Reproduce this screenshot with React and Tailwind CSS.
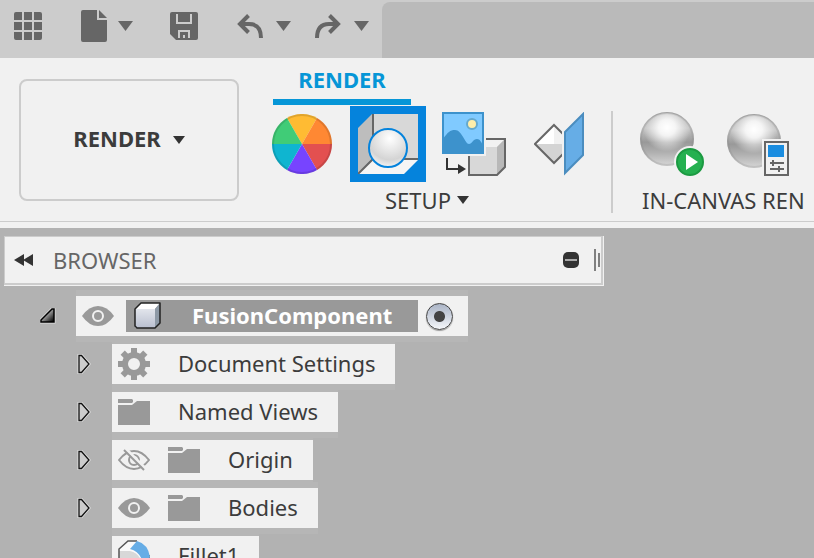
import React from 'react';

function Caret({ className }) {
  return (
    <svg viewBox="0 0 14 10" className={className} preserveAspectRatio="none" aria-hidden="true">
      <path d="M0 0H14L7 10Z" fill="currentColor" />
    </svg>
  );
}

function GridIcon() {
  return (
    <svg width="28" height="28" viewBox="0 0 28 28" fill="currentColor" aria-hidden="true">
      <path d="M2 0H8V8H0V2Q0 0 2 0ZM10 0H18V8H10ZM20 0H26Q28 0 28 2V8H20ZM0 10H8V18H0ZM10 10H18V18H10ZM20 10H28V18H20ZM0 20H8V28H2Q0 28 0 26ZM10 20H18V28H10ZM20 20H28V26Q28 28 26 28H20Z" />
    </svg>
  );
}

function FileIcon() {
  return (
    <svg width="26" height="32" viewBox="0 0 26 32" fill="currentColor" aria-hidden="true">
      <path d="M2 0H16V10H26V30Q26 32 24 32H2Q0 32 0 30V2Q0 0 2 0Z" />
      <path d="M18 0L26 8H18Z" />
    </svg>
  );
}

function SaveIcon() {
  return (
    <svg width="28" height="28" viewBox="0 0 28 28" aria-hidden="true">
      <path d="M2 0H26Q28 0 28 2V26Q28 28 26 28H6L0 22V2Q0 0 2 0Z" fill="#666" />
      <path d="M7 2V11H21V2M9 26V19H19V26" fill="none" stroke="#ccc" strokeWidth="2" />
      <path d="M13 23H15V26H13Z" fill="#ccc" />
    </svg>
  );
}

function UndoIcon({ flip }) {
  return (
    <svg width="26" height="24" viewBox="0 0 26 24" fill="none" stroke="currentColor" strokeWidth="4" className={flip ? '-scale-x-100' : ''} aria-hidden="true">
      <path d="M11.500 1.500L3 10L11.500 18.500M3 10H12Q24 10 24 24" />
    </svg>
  );
}

function WheelIcon() {
  return (
    <svg width="60" height="60" viewBox="0 0 60 60" aria-hidden="true">
      <path d="M30 30L15 4A30 30 0 0 1 45 4Z" fill="#ffbb33" />
      <path d="M30 30L45 4A30 30 0 0 1 60 30Z" fill="#ff8833" />
      <path d="M30 30H60A30 30 0 0 1 45 56Z" fill="#e35050" />
      <path d="M30 30L45 56A30 30 0 0 1 15 56Z" fill="#7744ff" />
      <path d="M30 30L15 56A30 30 0 0 1 0 30Z" fill="#0fb5d0" />
      <path d="M30 30H0A30 30 0 0 1 15 4Z" fill="#40cc77" />
      <circle cx="30" cy="30" r="29" fill="none" stroke="#000" strokeOpacity=".12" strokeWidth="2" />
    </svg>
  );
}

function SceneIcon() {
  return (
    <svg width="60" height="60" viewBox="0 0 60 60" aria-hidden="true">
      <defs>
        <radialGradient id="sceneBall" cx=".55" cy=".25" r=".75">
          <stop offset="0" stopColor="#fff" />
          <stop offset=".3" stopColor="#eee" />
          <stop offset=".75" stopColor="#d4d4d4" />
          <stop offset="1" stopColor="#f4f4f4" />
        </radialGradient>
      </defs>
      <path d="M14 0H60V45H14Z" fill="#d8d8d8" />
      <path d="M0 14L14 0V45L0 60Z" fill="#bdbdbd" />
      <path d="M0 60L14 46H60L46 60Z" fill="#f5f5f5" />
      <path d="M15 0V45L0 60M15 45H60" fill="none" stroke="#666" strokeWidth="2" />
      <circle cx="30" cy="34" r="19" fill="url(#sceneBall)" stroke="#0583dc" strokeWidth="2" />
    </svg>
  );
}

function DecalIcon() {
  return (
    <svg width="64" height="64" viewBox="0 0 64 64" aria-hidden="true">
      <path d="M27 27H63V55L55 63H27Z" fill="#d8d8d8" />
      <path d="M27 35L35 27H63L55 35Z" fill="#f2f2f2" />
      <path d="M55 35L63 27V55L55 63Z" fill="#b8b8b8" />
      <path d="M27 27H63V55L55 63H27Z" fill="none" stroke="#666" strokeWidth="2" />
      <path d="M0 0H44V44H0Z" fill="#f1f1f1" />
      <path d="M1 1H41V41H1Z" fill="#80caff" />
      <path d="M1 27C6 20 8 18 13 18C20 18 23 32 27 32C30 32 31 27 35 27C38 27 39 30 41 33V41H1Z" fill="#3d92cc" />
      <circle cx="30" cy="12" r="5" fill="#ffeeaa" stroke="#66a9cc" strokeWidth="2" />
      <path d="M1 1H41V41H1Z" fill="none" stroke="#3d92cc" strokeWidth="2" />
      <path d="M5 46V57H17" fill="none" stroke="#333" strokeWidth="2" />
      <path d="M16 52L24 57L16 62Z" fill="#333" />
    </svg>
  );
}

function TextureIcon() {
  return (
    <svg width="52" height="64" viewBox="0 0 52 64" aria-hidden="true">
      <path d="M1 32L20 13L39 32Z" fill="#fff" />
      <path d="M20 13L39 32H20Z" fill="#f1f1f1" />
      <path d="M1 32H20V51Z" fill="#e8e8e8" />
      <path d="M20 32H39L20 51L1 32Z" fill="#d4d4d4" />
      <path d="M20 13L39 32L20 51L1 32Z" fill="none" stroke="#666" strokeWidth="2" />
      <path d="M28 8H34V60H28Z" fill="#f1f1f1" />
      <path d="M31 20L49 2V43L31 61Z" fill="#66ade6" stroke="#4b8dbf" strokeWidth="2" />
    </svg>
  );
}

function Sphere({ id, cx, cy }) {
  return (
    <g>
      <defs>
        <linearGradient id={id + 'Base'} x1="0" y1="0" x2="0" y2="1">
          <stop offset="0" stopColor="#aaa" />
          <stop offset=".3" stopColor="#c4c4c4" />
          <stop offset=".56" stopColor="#999" />
          <stop offset=".75" stopColor="#b0b0b0" />
          <stop offset="1" stopColor="#d8d8d8" />
        </linearGradient>
        <radialGradient id={id + 'Glow'} cx=".5" cy=".28" r=".46">
          <stop offset="0" stopColor="#fff" />
          <stop offset=".35" stopColor="#fff" stopOpacity=".85" />
          <stop offset="1" stopColor="#fff" stopOpacity="0" />
        </radialGradient>
      </defs>
      <circle cx={cx} cy={cy} r="27" fill={'url(#' + id + 'Base)'} />
      <circle cx={cx} cy={cy} r="26" fill={'url(#' + id + 'Glow)'} />
      <circle cx={cx} cy={cy} r="26" fill="none" stroke="#888" strokeOpacity=".25" strokeWidth="2" />
    </g>
  );
}

function RenderPlayIcon() {
  return (
    <svg width="64" height="64" viewBox="0 0 64 64" aria-hidden="true">
      <Sphere id="play" cx="27" cy="27" />
      <circle cx="50" cy="50" r="16" fill="#f1f1f1" />
      <circle cx="50" cy="50" r="13" fill="#25b050" stroke="#1c9a42" strokeWidth="2" />
      <path d="M46 42L58 50L46 58Z" fill="#fff" />
    </svg>
  );
}

function RenderSettingsIcon() {
  return (
    <svg width="64" height="64" viewBox="0 0 64 64" aria-hidden="true">
      <Sphere id="prefs" cx="28" cy="29" />
      <path d="M36 27H64V64H36Z" fill="#f1f1f1" />
      <path d="M39 30H62V63H39Z" fill="#f1f1f1" stroke="#666" strokeWidth="2" />
      <path d="M42 33H58V45H42Z" fill="#1a8de0" />
      <path d="M44 51H58M44 57H58M47 48V54M53 54V60" fill="none" stroke="#666" strokeWidth="2" />
    </svg>
  );
}

function EyeIcon() {
  return (
    <svg width="32" height="20" viewBox="0 0 32 20" aria-hidden="true">
      <path d="M0 10Q7 0 16 0T32 10Q25 20 16 20T0 10Z" fill="#999" />
      <circle cx="16" cy="10" r="5" fill="#999" stroke="#f1f1f1" strokeWidth="2" />
    </svg>
  );
}

function EyeOffIcon() {
  return (
    <svg width="32" height="22" viewBox="0 0 32 22" fill="none" aria-hidden="true">
      <path d="M1 11Q8 2 16 2T31 11Q24 20 16 20T1 11Z" stroke="#999" strokeWidth="2" />
      <circle cx="16" cy="11" r="5" stroke="#999" strokeWidth="2" />
      <path d="M8 0L28 20" stroke="#f1f1f1" strokeWidth="3" />
      <path d="M6 1L26 21" stroke="#999" strokeWidth="2" />
    </svg>
  );
}

function FolderIcon() {
  return (
    <svg width="32" height="26" viewBox="0 0 32 26" fill="#999" aria-hidden="true">
      <path d="M0 0H14L15 1V3L14 4H0Z" />
      <path d="M0 6H14L19 2H32V26H0Z" />
    </svg>
  );
}

const teeth = [0, 45, 90, 135, 180, 225, 270, 315];

function GearIcon() {
  return (
    <svg width="32" height="32" viewBox="0 0 32 32" aria-hidden="true">
      {teeth.map((angle) => (
        <path key={angle} d="M13 0H19V8H13Z" fill="#999" transform={'rotate(' + angle + ' 16 16)'} />
      ))}
      <circle cx="16" cy="16" r="9" fill="none" stroke="#999" strokeWidth="6" />
    </svg>
  );
}

function CubeIcon() {
  return (
    <svg width="28" height="28" viewBox="0 0 28 28" aria-hidden="true">
      <defs>
        <linearGradient id="cubeFront" x1="0" y1="0" x2="0" y2="1">
          <stop offset="0" stopColor="#e2e5ec" />
          <stop offset="1" stopColor="#b9bfcf" />
        </linearGradient>
      </defs>
      <path d="M1 7L7 1H26L21 7Z" fill="#fff" />
      <path d="M21 7L26 1V21L21 26Z" fill="#8d99a6" />
      <path d="M1 7H21V26H1Z" fill="url(#cubeFront)" />
      <path d="M1 7L7 1H26V21L21 26H3L1 24Z" fill="none" stroke="#222" strokeWidth="1.500" strokeLinejoin="round" />
    </svg>
  );
}

function FilletIcon() {
  return (
    <svg width="32" height="32" viewBox="0 0 32 32" aria-hidden="true">
      <path d="M1 9L10 1H21L31 12V31H1Z" fill="#fafafa" />
      <path d="M1 11H12Q22 13 24 24V32H1Z" fill="#d8d8d8" />
      <path d="M1 32V9L10 1H19M31 15V32" fill="none" stroke="#555" strokeWidth="1.500" />
      <path d="M12 9L19 1Q30 4 32 17L25 24Q23 12 12 9Z" fill="#66ade6" />
    </svg>
  );
}

function Twisty({ open }) {
  return (
    <button type="button" aria-label={open ? 'Collapse' : 'Expand'} className="flex h-10 w-4 shrink-0 items-center justify-center">
      {open ? (
        <svg width="16" height="16" viewBox="0 0 16 16" aria-hidden="true">
          <defs>
            <linearGradient id="openArrow" x1="0" y1="0" x2="1" y2="1">
              <stop offset=".4" stopColor="#aaa" />
              <stop offset=".9" stopColor="#111" />
            </linearGradient>
          </defs>
          <path d="M1 14V12L12 1H14V14Z" fill="none" stroke="#ddd" strokeWidth="3" />
          <path d="M1 14V12L12 1H14V14Z" fill="url(#openArrow)" stroke="#000" strokeWidth="1.500" />
        </svg>
      ) : (
        <svg width="14" height="20" viewBox="0 0 14 20" aria-hidden="true">
          <path d="M2 1.500H4.500L12 10L4.500 18.500H2Z" fill="none" stroke="#ddd" strokeWidth="3" />
          <path d="M2 1.500H4.500L12 10L4.500 18.500H2Z" fill="#ccc" stroke="#111" strokeWidth="1.300" />
        </svg>
      )}
    </button>
  );
}

function TreeRow({ icons, label, leaf }) {
  return (
    <li className="flex items-center gap-5 pl-18">
      {leaf ? <span className="w-4 shrink-0" /> : <Twisty />}
      <div className="flex h-10 items-center bg-[#f1f1f1] pr-5 pl-1.5 shadow-[0_-6px_0_#b6b6b6,0_6px_0_#b6b6b6]">
        <span className="flex items-center gap-4.5">{icons}</span>
        <span className="ml-7 pb-0.5 whitespace-nowrap">{label}</span>
      </div>
    </li>
  );
}

function ToolButton({ label, active, children }) {
  return (
    <button
      type="button"
      aria-label={label}
      className={active ? 'flex size-19 shrink-0 items-center justify-center bg-[#0583dc]' : 'flex size-19 shrink-0 items-center justify-center'}
    >
      {children}
    </button>
  );
}

export default function App() {
  return (
    <div className="flex h-screen flex-col overflow-hidden bg-[#b2b2b2] font-['Noto_Sans',sans-serif] text-[22px] leading-7 text-[#3c3c3c]">
      <header className="flex h-[58px] shrink-0 bg-[#ccc] text-[#666]">
        <div className="flex items-center pb-1.5 pl-3.5">
          <button type="button" aria-label="Data panel"><GridIcon /></button>
          <button type="button" aria-label="File" className="ml-[39px] flex items-center gap-[11px]"><FileIcon /><Caret className="h-2.5 w-[15px]" /></button>
          <button type="button" aria-label="Save" className="ml-[37px]"><SaveIcon /></button>
          <button type="button" aria-label="Undo" className="ml-[39px] flex items-center gap-[13px]"><UndoIcon /><Caret className="h-2.5 w-[15px]" /></button>
          <button type="button" aria-label="Redo" className="ml-6 flex items-center gap-[13px]"><UndoIcon flip /><Caret className="h-2.5 w-[15px]" /></button>
        </div>
        <div className="mt-0.5 ml-[13px] flex-1 rounded-tl-lg bg-[#bababa]" />
      </header>

      <section className="h-[170px] shrink-0 bg-[#f1f1f1] pb-1.5">
        <div className="flex h-full border-b border-[#ccc]">
          <button type="button" className="mt-[21px] ml-[19px] flex h-[122px] w-[220px] shrink-0 items-center justify-center gap-3 rounded-lg border-2 border-[#ccc] pb-1 font-bold">
            RENDER
            <Caret className="mt-1 h-2 w-3 text-[#333]" />
          </button>
          <div className="ml-[25px] flex min-w-0 flex-1 flex-col">
            <button type="button" className="ml-[9px] h-[47px] w-[138px] shrink-0 border-b-6 border-[#0696d7] text-center font-bold text-[#0696d7]">RENDER</button>
            <div className="flex">
              <div className="flex shrink-0 flex-col items-center pt-px">
                <div className="flex gap-2.5">
                  <ToolButton label="Appearance"><WheelIcon /></ToolButton>
                  <ToolButton label="Scene settings" active><SceneIcon /></ToolButton>
                  <ToolButton label="Decal"><DecalIcon /></ToolButton>
                  <ToolButton label="Texture map controls"><TextureIcon /></ToolButton>
                </div>
                <button type="button" className="mt-1 mr-2 flex items-center gap-1.5">
                  SETUP
                  <Caret className="h-2 w-3 text-[#333]" />
                </button>
              </div>
              <div className="mt-1.5 ml-[13px] h-[102px] w-0.5 shrink-0 bg-[#ccc]" />
              <div className="ml-[21px] pt-px">
                <div className="flex gap-2.5">
                  <ToolButton label="In-canvas render"><RenderPlayIcon /></ToolButton>
                  <ToolButton label="In-canvas render settings"><RenderSettingsIcon /></ToolButton>
                </div>
                <div className="mt-1 ml-2 whitespace-nowrap">IN-CANVAS REN</div>
              </div>
            </div>
          </div>
        </div>
      </section>

      <main className="flex-1 px-1 pt-2">
        <div className="w-[600px] max-w-full border-r border-b border-[#f1f1f1]">
          <div className="flex h-[49px] items-center border-t border-r-2 border-b-2 border-l border-[#ccc] bg-[#f1f1f1]">
            <button type="button" aria-label="Collapse browser" className="ml-2">
              <svg width="20" height="12" viewBox="0 0 20 12" aria-hidden="true">
                <path d="M1 6L11 0V12ZM10 6L20 0V12Z" fill="#333" />
              </svg>
            </button>
            <h2 className="ml-5 flex-1 text-[#666]">BROWSER</h2>
            <button type="button" aria-label="Minimize" className="mr-[15px]">
              <svg width="16" height="16" viewBox="0 0 16 16" aria-hidden="true">
                <rect width="16" height="16" rx="5" fill="#333" />
                <path d="M2 8H14" stroke="#aaa" strokeWidth="2" />
              </svg>
            </button>
            <svg width="6" height="22" viewBox="0 0 6 22" className="mr-px" aria-hidden="true">
              <path d="M1 0V22M5 4V18" stroke="#808080" strokeWidth="2" />
            </svg>
          </div>
        </div>

        <ul className="mt-2.5 flex flex-col gap-2">
          <li className="flex items-center gap-5 pl-9">
            <Twisty open />
            <div className="flex h-10 items-center bg-[#f1f1f1] pr-[15px] pl-1.5 shadow-[0_-6px_0_#b6b6b6,0_6px_0_#b6b6b6]">
              <EyeIcon />
              <div className="ml-3 flex h-8 w-[292px] items-center bg-[#999] pl-2 font-bold text-white">
                <CubeIcon />
                <span className="ml-7.5 pb-0.5">FusionComponent</span>
              </div>
              <input
                type="radio"
                name="active-component"
                aria-label="Activate FusionComponent"
                defaultChecked
                className="ml-2 size-[27px] appearance-none rounded-full border border-[#444] bg-[radial-gradient(circle,#444_0_5px,transparent_6px),linear-gradient(#aab4c6,#f4f6fa)] shadow-[0_1px_1px_#999]"
              />
            </div>
          </li>
          <TreeRow icons={<GearIcon />} label="Document Settings" />
          <TreeRow icons={<FolderIcon />} label="Named Views" />
          <TreeRow icons={<><EyeOffIcon /><FolderIcon /></>} label="Origin" />
          <TreeRow icons={<><EyeIcon /><FolderIcon /></>} label="Bodies" />
          <TreeRow icons={<FilletIcon />} label="Fillet1" leaf />
        </ul>
      </main>
    </div>
  );
}
